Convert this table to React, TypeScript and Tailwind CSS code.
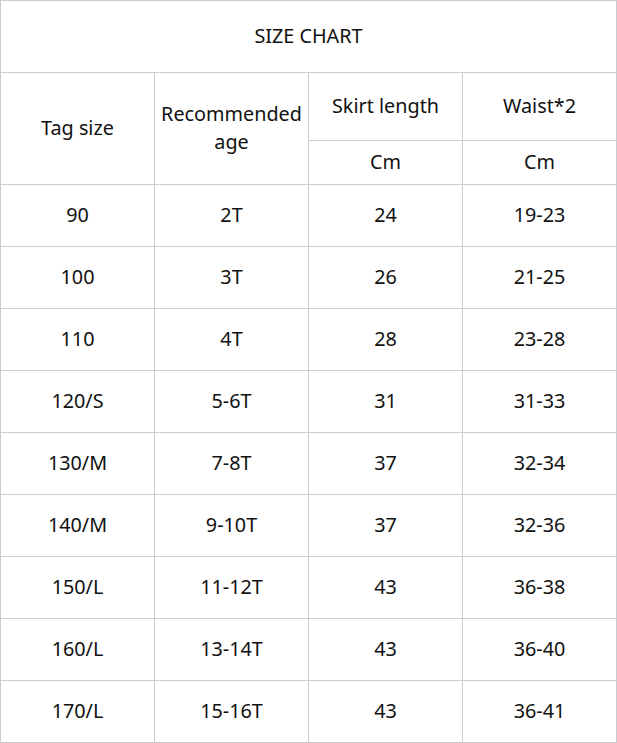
import React from "react";

const rows = [
  ["90", "2T", "24", "19-23"],
  ["100", "3T", "26", "21-25"],
  ["110", "4T", "28", "23-28"],
  ["120/S", "5-6T", "31", "31-33"],
  ["130/M", "7-8T", "37", "32-34"],
  ["140/M", "9-10T", "37", "32-36"],
  ["150/L", "11-12T", "43", "36-38"],
  ["160/L", "13-14T", "43", "36-40"],
  ["170/L", "15-16T", "43", "36-41"],
];

const cell = "flex items-center justify-center text-center pb-[2px] border-r border-b border-[#c9ccd1]";

export default function App() {
  return (
    <div className="w-[617px] h-[743px] bg-white text-[#111] text-[19.8px] leading-[28px] font-['Noto_Sans','Open_Sans',sans-serif]">
      <div className="grid grid-cols-[154px_154px_154px_154px] grid-rows-[72px_68px_44px_repeat(9,62px)] border-l border-t border-[#c9ccd1]">
        <div className={`${cell} col-span-4`}>SIZE CHART</div>
        <div className={`${cell} row-span-2`}>Tag size</div>
        <div className={`${cell} row-span-2`}>
          Recommended
          <br />
          age
        </div>
        <div className={cell}>Skirt length</div>
        <div className={cell}>Waist*2</div>
        <div className={cell}>Cm</div>
        <div className={cell}>Cm</div>
        {rows.map((r) =>
          r.map((v, i) => (
            <div key={r[0] + i} className={cell}>
              {v}
            </div>
          ))
        )}
      </div>
    </div>
  );
}
